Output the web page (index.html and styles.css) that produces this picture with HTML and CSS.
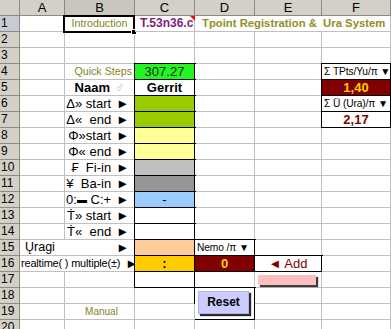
FILE: index.html
```html
<!DOCTYPE html>
<html>
<head>
<meta charset="utf-8">
<title>Tpoint Registration</title>
<link rel="stylesheet" href="styles.css">
</head>
<body>
<div class="sheet">
  <div class="c h corner"></div>
  <div class="c h">A</div><div class="c h hs">B</div><div class="c h">C</div><div class="c h">D</div><div class="c h">E</div><div class="c h">F</div>

  <div class="c rh rhs">1</div><div class="c"></div><div class="c sel olive small ctr">Introduction</div><div class="c cm purple">T.53n36.c</div><div class="c s3 title">Tpoint Registration &amp;  Ura System</div>

  <div class="c rh">2</div><div class="c"></div><div class="c"></div><div class="c"></div><div class="c"></div><div class="c"></div><div class="c"></div>
  <div class="c rh">3</div><div class="c"></div><div class="c"></div><div class="c"></div><div class="c"></div><div class="c"></div><div class="c"></div>

  <div class="c rh">4</div><div class="c"></div><div class="c olive small r">Quick Steps</div><div class="c bx green ctr">307.27</div><div class="c"></div><div class="c"></div><div class="c bx tiny">Σ TPts/Yu/π ▼</div>

  <div class="c rh">5</div><div class="c"></div><div class="c ctr bold">Naam <span class="male">♂</span></div><div class="c bx ctr bold">Gerrit</div><div class="c"></div><div class="c"></div><div class="c bx dred ctr bold gold">1,40</div>

  <div class="c rh">6</div><div class="c"></div><div class="c lab">Δ» start<span class="ar">►</span></div><div class="c bx lime"></div><div class="c"></div><div class="c"></div><div class="c bx tiny">Σ Ü (Ura)/π ▼</div>

  <div class="c rh">7</div><div class="c"></div><div class="c lab">Δ«  end<span class="ar">►</span></div><div class="c bx lime"></div><div class="c"></div><div class="c"></div><div class="c bx ctr bold redtxt">2,17</div>

  <div class="c rh">8</div><div class="c"></div><div class="c lab">Φ»start<span class="ar">►</span></div><div class="c bx ltyellow"></div><div class="c"></div><div class="c"></div><div class="c"></div>
  <div class="c rh">9</div><div class="c"></div><div class="c lab">Φ« end<span class="ar">►</span></div><div class="c bx ltyellow"></div><div class="c"></div><div class="c"></div><div class="c"></div>
  <div class="c rh">10</div><div class="c"></div><div class="c lab">₣  Fi-in<span class="ar">►</span></div><div class="c bx gray25"></div><div class="c"></div><div class="c"></div><div class="c"></div>
  <div class="c rh">11</div><div class="c"></div><div class="c lab">¥  Ba-in<span class="ar">►</span></div><div class="c bx gray40"></div><div class="c"></div><div class="c"></div><div class="c"></div>
  <div class="c rh">12</div><div class="c"></div><div class="c lab">0:<span class="bar">▬</span> C:+<span class="ar">►</span></div><div class="c bx pblue ctr">-</div><div class="c"></div><div class="c"></div><div class="c"></div>
  <div class="c rh">13</div><div class="c"></div><div class="c lab">Ṫ» start<span class="ar">►</span></div><div class="c bx"></div><div class="c"></div><div class="c"></div><div class="c"></div>
  <div class="c rh">14</div><div class="c"></div><div class="c lab">Ṫ«  end<span class="ar">►</span></div><div class="c bx"></div><div class="c"></div><div class="c"></div><div class="c"></div>

  <div class="c rh">15</div><div class="c s2 wide"><span class="ura">Ųragi</span><span class="ar">►</span></div><div class="c bx tan"></div><div class="c bx tiny">Nemo /π ▼</div><div class="c"></div><div class="c"></div>

  <div class="c rh">16</div><div class="c s2 wide"><span class="rt">realtime( ) multiple(±)</span><span class="ar">►</span></div><div class="c bx goldbg ctr bold">:</div><div class="c bx dred ctr bold gold">0</div><div class="c bx ctr redtxt">◄ Add</div><div class="c"></div>

  <div class="c rh">17</div><div class="c"></div><div class="c"></div><div class="c bx"></div><div class="c"></div><div class="c shapecell"><div class="pink"></div></div><div class="c"></div>

  <div class="c rh">18</div><div class="c"></div><div class="c"></div><div class="c"></div><div class="c bx r2 btncell"><div class="reset">Reset</div></div><div class="c"></div><div class="c"></div>

  <div class="c rh">19</div><div class="c"></div><div class="c olive small ctr manual">Manual</div><div class="c"></div><div class="c"></div><div class="c"></div>

  <div class="c rh">20</div><div class="c"></div><div class="c"></div><div class="c"></div><div class="c"></div><div class="c"></div><div class="c"></div>
</div>
</body>
</html>
```

FILE: styles.css
```css
html, body {
  margin: 0;
  padding: 0;
  background: #fff;
}
body {
  width: 391px;
  height: 329px;
  overflow: hidden;
  font-family: "Liberation Sans", Arial, sans-serif;
  color: #000;
}
.sheet {
  display: grid;
  grid-template-columns: 20px 45px 70px 60px 60px 67px 69px;
  grid-auto-rows: 16px;
}
.c {
  box-sizing: border-box;
  border-right: 1px solid #c0c0c0;
  border-bottom: 1px solid #c0c0c0;
  background: #fff;
  font-size: 13px;
  line-height: 15px;
  white-space: pre;
  display: flex;
  align-items: center;
  padding: 0 2px;
  min-width: 0;
}
.h {
  background: #d4d0c8;
  border-right-color: #8c8a84;
  border-bottom-color: #8c8a84;
  justify-content: center;
  font-size: 13px;
}
.hs { background: #c9c6be; }
.rh {
  background: #d4d0c8;
  border-right-color: #8c8a84;
  border-bottom-color: #8c8a84;
  font-size: 12px;
  padding-left: 1px;
}
.rhs { background: #c6cbd6; }
.ctr { justify-content: center; }
.r { justify-content: flex-end; }
.bold { font-weight: bold; }
.small { font-size: 10.7px; }
.olive { color: #858520; }
.purple { color: #7f1f7f; font-weight: bold; font-size: 12px; padding-left: 5px; }
.title { color: #8f8f25; font-weight: bold; font-size: 11.3px; padding-left: 7px; }
.s2 { grid-column: span 2; }
.s3 { grid-column: span 3; }
.r2 { grid-row: span 2; }
.bx {
  border-color: #000;
  box-shadow: 0 0 0 1px #000;
}
.tiny { font-size: 10.2px; padding-left: 2px; letter-spacing: -0.1px; }
.green { background: #22f522; color: #102a10; font-size: 13px; }
.lime { background: #99cc00; }
.ltyellow { background: #ffff99; }
.gray25 { background: #c0c0c0; }
.gray40 { background: #969696; }
.pblue { background: #99ccff; }
.tan { background: #ffcc99; }
.goldbg { background: #ffcc00; }
.dred { background: #800000; }
.gold { color: #ffcc00; }
.redtxt { color: #800000; }
.male { color: #bdbdbd; font-weight: normal; margin-left: 1px; }
.lab { justify-content: flex-end; padding-right: 5px; }
.ar { margin-left: 5px; font-size: 13px; }
.bar { font-size: 10px; }
.wide { justify-content: space-between; padding-right: 5px; padding-left: 0; }
.ura { padding-left: 5px; font-size: 12.5px; }
.rt { font-size: 11px; letter-spacing: -0.2px; padding-left: 1px; }
.manual { font-size: 10px; padding-left: 6px; }
.sel { position: relative; }
.sel::before {
  content: "";
  position: absolute;
  left: -2px;
  top: -1px;
  right: -1px;
  bottom: -2px;
  border: 2px solid #000;
}
.sel::after {
  content: "";
  position: absolute;
  right: -3px;
  bottom: -4px;
  width: 4px;
  height: 4px;
  background: #000;
  border: 1px solid #fff;
}
.cm { position: relative; }
.cm::after {
  content: "";
  position: absolute;
  top: 0;
  right: -1px;
  border-style: solid;
  border-width: 5px 0 0 5px;
  border-color: #f00 transparent transparent transparent;
}
.shapecell { padding: 0 0 0 3px; align-items: flex-start; }
.pink {
  margin-top: 3px;
  width: 58px;
  height: 10px;
  background: #ffbfbf;
  box-shadow: 2px 2px 1px #3c3c3c;
}
.btncell { padding: 3px 0 0 3px; align-items: flex-start; }
.reset {
  box-sizing: border-box;
  width: 51px;
  height: 23px;
  background: #ccccff;
  border: 1px solid #b4b4e8;
  box-shadow: 2px 2px 1px #2a2a2a;
  font-weight: bold;
  font-size: 12px;
  display: flex;
  align-items: center;
  justify-content: center;
}
```
